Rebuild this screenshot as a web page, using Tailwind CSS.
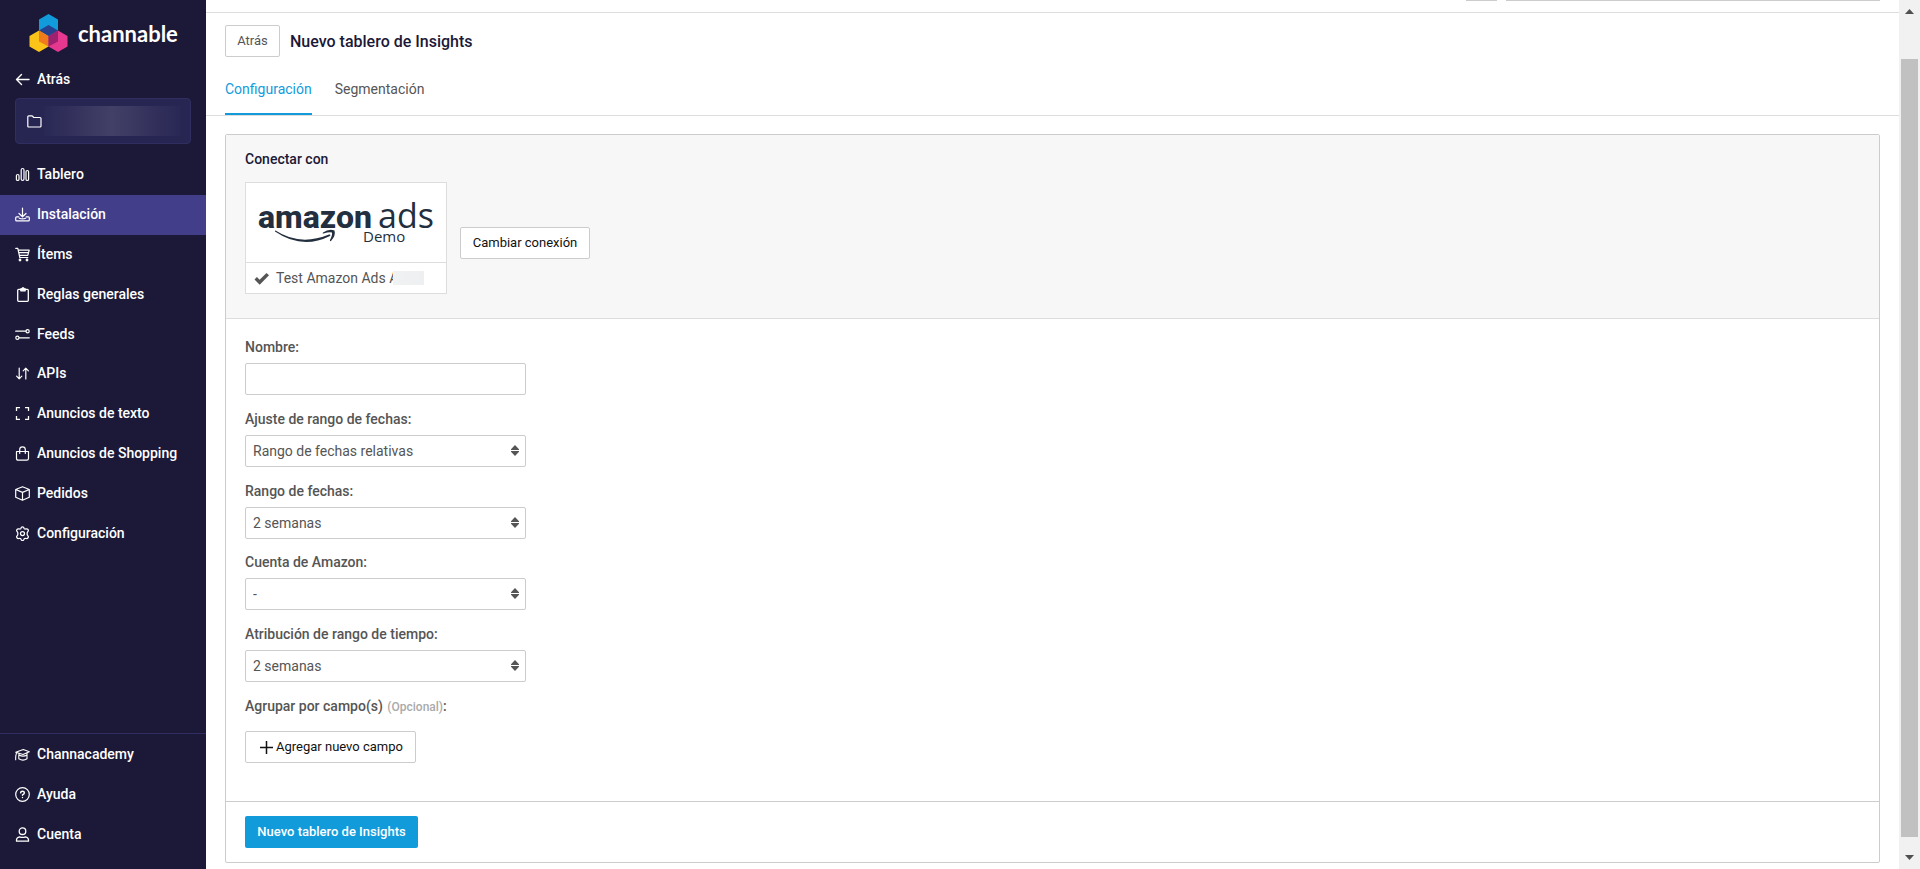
<!DOCTYPE html>
<html lang="es">

<head>
    <meta charset="utf-8">
    <meta name="viewport" content="width=device-width, initial-scale=1">
    <title>Channable - Nuevo tablero de Insights</title>
    <script src="https://cdn.jsdelivr.net/npm/@tailwindcss/browser@4"></script>
</head>

<body class="flex h-screen overflow-hidden bg-white font-['Roboto',sans-serif] text-sm leading-5 text-[#555]">

    <!-- Sidebar -->
    <aside class="flex w-[206px] shrink-0 flex-col bg-[#1b1937] font-medium text-white">
        <div class="flex h-[60px] items-start gap-[10px] pt-[14px] pl-[29px]">
            <svg class="h-[38px] w-[39px] shrink-0" viewBox="0 0 39 38">
                <path fill="#119bdb" d="M19.500 0l9.500 5.500v11l-9.500 5.500-9.500-5.500v-11z" />
                <path fill="#fcc419" d="M10 16.500l9.500 5.500v10.500L10 38 .500 32.500V22z" />
                <path fill="#e6388f" d="M29 16.500l9.500 5.500v10.500L29 38l-9.500-5.500V22z" />
                <path fill="#27418f" d="M19.500 11l9.500 5.500-9.500 5.500-9.500-5.500z" />
                <path fill="#ef7b1c" d="M10 16.500l9.500 5.500v10.500L10 27.500z" />
                <path fill="#9e2170" d="M29 16.500l-9.500 5.500v10.500l9.500-5z" />
            </svg>
            <span class="font-['Lato',sans-serif] text-[22px] leading-10 font-bold">channable</span>
        </div>

        <a href="#" class="flex h-[38px] items-center gap-[7px] px-[15px]">
            <svg class="size-[15px]" viewBox="0 0 15 15" fill="none" stroke="currentColor" stroke-width="1.400" stroke-linecap="round" stroke-linejoin="round"><path d="M14 7.500H1.500M6.500 2.500l-5 5 5 5" /></svg>
            Atrás
        </a>

        <!-- Current project, name hidden -->
        <div class="mx-[15px] flex h-[46px] items-center gap-[2px] rounded border border-[#302e60] bg-[#272552] pr-[10px] pl-[11px]">
            <svg class="size-[15px] shrink-0" viewBox="0 0 15 15" fill="none" stroke="currentColor" stroke-width="1.200" stroke-linejoin="round"><path d="M.800 12V2.800q0-1 1-1h3.400l1.600 1.700h6.200q1 0 1 1V12q0 1-1 1H1.800q-1 0-1-1z" /></svg>
            <div class="h-[30px] flex-1 bg-linear-to-r from-[#292754] via-[#434067] to-[#292754]"></div>
        </div>

        <nav class="mt-[11px] flex flex-col">
            <a href="#" class="flex h-10 items-center gap-[7px] px-[15px] pb-0.5">
                <svg class="size-[15px]" viewBox="0 0 15 15" fill="none" stroke="currentColor" stroke-width="1.200"><rect x="1.400" y="7.500" width="2.600" height="6" rx="1.300" /><rect x="6.200" y="1.500" width="2.800" height="12" rx="1.400" /><rect x="11" y="3.500" width="2.600" height="10" rx="1.300" /></svg>
                Tablero
            </a>
            <a href="#" class="flex h-10 items-center gap-[7px] bg-[#433e8a] px-[15px] pb-0.5">
                <svg class="size-[15px]" viewBox="0 0 15 15" fill="none" stroke="currentColor" stroke-width="1.200" stroke-linecap="round" stroke-linejoin="round"><path d="M7.500 1v8.500M4 6.500l3.500 3.300L11 6.500M3.800 9.800H1.600q-.9 0-.9.900v2.200q0 .9.900.9h11.800q.9 0 .9-.9v-2.200q0-.9-.9-.9h-2.200" /><path d="M4.300 11.200q3.200 1.400 6.400 0" /></svg>
                Instalación
            </a>
            <a href="#" class="flex h-10 items-center gap-[7px] px-[15px] pb-0.5">
                <svg class="size-[15px]" viewBox="0 0 15 15" fill="none" stroke="currentColor" stroke-width="1.200" stroke-linecap="round" stroke-linejoin="round"><path d="M.7 1.300h2.100l2 9.200h8M3.200 3.200h11L12.800 8.300H4.300M4 5.700h9.400" /><circle cx="5" cy="13" r=".8" fill="currentColor" /><circle cx="12" cy="13" r=".8" fill="currentColor" /></svg>
                Ítems
            </a>
            <a href="#" class="flex h-10 items-center gap-[7px] px-[15px] pb-0.5">
                <svg class="size-[15px]" viewBox="0 0 15 15" fill="none" stroke="currentColor" stroke-width="1.300" stroke-linejoin="round"><rect x="2.700" y="2.300" width="10.600" height="12" rx="1" /><path fill="currentColor" d="M5.800 1.800h1l.7-1h1l.7 1h1v2H5.800z" /></svg>
                Reglas generales
            </a>
            <a href="#" class="flex h-10 items-center gap-[7px] px-[15px] pb-0.5">
                <svg class="size-[15px]" viewBox="0 0 15 15" fill="none" stroke="currentColor" stroke-width="1.200" stroke-linecap="round"><path d="M.7 4.200h10.200M4.300 10.800h10" /><circle cx="12.600" cy="4.200" r="1.600" /><circle cx="2.400" cy="10.800" r="1.600" /></svg>
                Feeds
            </a>
            <a href="#" class="flex h-10 items-center gap-[7px] px-[15px] pb-1">
                <svg class="size-[15px]" viewBox="0 0 15 15" fill="none" stroke="currentColor" stroke-width="1.200" stroke-linecap="round" stroke-linejoin="round"><path d="M4.200 2v10.800M1.600 10.200l2.600 2.600 2.600-2.600M10.800 13V2.200M8.200 4.800l2.600-2.600 2.600 2.600" /></svg>
                APIs
            </a>
            <a href="#" class="flex h-10 items-center gap-[7px] px-[15px] pb-1">
                <svg class="size-[15px]" viewBox="0 0 15 15" fill="none" stroke="currentColor" stroke-width="1.300"><path d="M1.500 5V1.700H5M10 1.700h3.500V5M13.500 10v3.300H10M5 13.300H1.500V10" /></svg>
                Anuncios de texto
            </a>
            <a href="#" class="flex h-10 items-center gap-[7px] px-[15px] pb-1">
                <svg class="size-[15px]" viewBox="0 0 15 15" fill="none" stroke="currentColor" stroke-width="1.200" stroke-linecap="round" stroke-linejoin="round"><path d="M1.500 5.500h12v7q0 1.700-1.700 1.700H3.200q-1.700 0-1.700-1.700zM4.700 7.500V3.600a2.800 2.800 0 0 1 5.600 0v3.900" /></svg>
                Anuncios de Shopping
            </a>
            <a href="#" class="flex h-10 items-center gap-[7px] px-[15px] pb-1">
                <svg class="size-[15px]" viewBox="0 0 15 15" fill="none" stroke="currentColor" stroke-width="1.200" stroke-linejoin="round"><path d="M7.500.8l6.800 2.700v7.700l-6.800 3-6.800-3V3.500zM.7 3.500l6.800 2.900 6.800-2.900M7.500 6.400v7.800" /></svg>
                Pedidos
            </a>
            <a href="#" class="flex h-10 items-center gap-[7px] px-[15px] pb-1">
                <svg class="size-[15px]" viewBox="0 0 24 24" fill="none" stroke="currentColor" stroke-width="2" stroke-linejoin="round"><path d="M9.500 3.600Q10 1.300 12 1.300t2.500 2.300l.3.700q1 .8 2.200.4l.8-.1q2.200-.4 3.200 1.300 1 1.800-.6 3.300-1 .9-1 3.100t1 3.100q1.600 1.500.6 3.300-1 1.700-3.200 1.300l-.8-.1q-1.200-.4-2.200.4l-.3.700q-.5 2.300-2.500 2.300t-2.500-2.300l-.3-.7q-1-.8-2.200-.4l-.8.100q-2.200.4-3.200-1.300-1-1.800.6-3.300 1-.9 1-3.100t-1-3.100Q2 7.700 3 5.900 4 4.200 6.200 4.600l.8.100q1.200.4 2.200-.4z" /><circle cx="12" cy="12" r="3.200" /></svg>
                Configuración
            </a>
        </nav>

        <nav class="mt-auto flex flex-col border-t border-[#302e60] pb-[15px]">
            <a href="#" class="flex h-10 items-center gap-[7px] px-[15px]">
                <svg class="size-[15px]" viewBox="0 0 15 15" fill="none" stroke="currentColor" stroke-width="1.100" stroke-linecap="round" stroke-linejoin="round"><path d="M.7 5.200l7.600-2.600 6 2.200-6.300 2.700zM4 6.500v1.300M4 8q4 2.200 8 0V6M3.800 8v3.800q4.200 2.600 8.200 0V8M1.500 5.800q-1 3-.8 7" /></svg>
                Channacademy
            </a>
            <a href="#" class="flex h-10 items-center gap-[7px] px-[15px]">
                <svg class="size-[15px]" viewBox="0 0 15 15" fill="none" stroke="currentColor" stroke-width="1.200" stroke-linecap="round"><circle cx="7.500" cy="7.500" r="6.800" /><path stroke-width="1.400" d="M5.600 5.900q.1-1.700 1.900-1.700t1.900 1.500q0 1-1.900 2.100v.5M7.500 10.500v.1" /></svg>
                Ayuda
            </a>
            <a href="#" class="flex h-10 items-center gap-[7px] px-[15px]">
                <svg class="size-[15px]" viewBox="0 0 15 15" fill="none" stroke="currentColor" stroke-width="1.300" stroke-linejoin="round"><circle cx="7.500" cy="4.200" r="3.300" /><path d="M1.500 14.200v-1.400q.3-2.600 3-3 3 1.300 6 0 2.700.4 3 3v1.400z" /></svg>
                Cuenta
            </a>
        </nav>
    </aside>

    <!-- Content -->
    <main class="min-w-0 flex-1 overflow-hidden">
        <!-- Lower edge of the toolbar that is scrolled away -->
        <div class="flex h-[13px] justify-end gap-[9px] border-b border-[#ddd] pr-[19px]">
            <div class="h-px w-[31px] bg-[#ccc]"></div>
            <div class="h-px w-[374px] bg-[#ccc]"></div>
        </div>

        <header class="border-b border-[#ddd] px-[19px] pt-3">
            <div class="flex items-center gap-[10px]">
                <button type="button" class="h-8 w-[55px] rounded-xs border border-[#ccc] text-[13px]">Atrás</button>
                <h1 class="pt-0.5 text-base font-medium text-[#1b1937]">Nuevo tablero de Insights</h1>
            </div>
            <div class="flex gap-[23px] pt-[22px]">
                <a href="#" class="h-9 border-b-2 border-[#119bdb] text-[#119bdb]">Configuración</a>
                <a href="#">Segmentación</a>
            </div>
        </header>

        <form class="mx-[19px] mt-[18px] rounded-xs border border-[#ccc]">
            <section class="border-b border-[#ddd] bg-[#f7f7f7] px-[19px] pt-[14px] pb-6">
                <h2 class="font-medium text-[#1b1937]">Conectar con</h2>
                <div class="mt-[13px] flex items-center gap-[13px]">
                    <div class="w-[202px] border border-[#ddd] bg-white">
                        <svg class="block h-[79px] w-[200px]" viewBox="0 0 200 79" fill="#232f3e" role="img" aria-label="amazon ads Demo">
                            <text x="12" y="45" font-family="Roboto, sans-serif" font-weight="800" font-size="32">amazon</text>
                            <text x="132" y="45" font-family="Open Sans, sans-serif" font-size="34">ads</text>
                            <text x="117" y="59" font-family="Open Sans, sans-serif" font-size="15">Demo</text>
                            <path d="M29.500 47.500Q54 63.500 83 51.500q2.500-.5 1 1.500Q56 67 29 48.500q-.5-1 .5-1z" />
                            <path d="M77 49.500q6-4 11.500-2 1.500 5-3.500 10.500-1.500.5-1-1 2.500-5 2-7.500-2.500-1-8.500 1-1.500.3-.5-1z" />
                        </svg>
                        <div class="relative flex h-[31px] items-center gap-[7px] border-t border-[#ddd] pl-2">
                            <svg class="size-[15px]" viewBox="0 0 15 15" fill="#555"><path d="M.5 8.500l2.400-2.400 2.700 2.700L12.500 2 15 4.300l-9.300 9.400z" /></svg>
                            <span>Test Amazon Ads A</span>
                            <span class="absolute top-2 left-[147px] h-[14px] w-[31px] bg-linear-to-r from-[#f1f2f2] to-[#edeff1]"></span>
                        </div>
                    </div>
                    <button type="button" class="mt-[10px] h-8 w-[130px] rounded-xs border border-[#ccc] bg-white text-[13px] text-[#111]">Cambiar conexión</button>
                </div>
            </section>

            <section class="flex flex-col items-start px-[19px] pt-[18px] pb-[38px]">
                <label for="name" class="font-medium">Nombre:</label>
                <input id="name" type="text" class="mt-[6px] h-8 w-[281px] rounded-xs border border-[#ccc] bg-white px-2">

                <label for="rangeType" class="mt-[14px] font-medium">Ajuste de rango de fechas:</label>
                <div class="relative mt-[6px] w-[281px]">
                    <select id="rangeType" class="block h-8 w-full appearance-none rounded-xs border border-[#ccc] bg-white pr-8 pl-[7px]">
                        <option>Rango de fechas relativas</option>
                    </select>
                    <svg class="pointer-events-none absolute top-[10px] right-[7px] h-[11px] w-2" viewBox="0 0 8 11" fill="#555"><path d="M4 0l4 4.200v.8H0v-.8zM4 11L0 6.800V6h8v.8z" /></svg>
                </div>

                <label for="range" class="mt-[14px] font-medium">Rango de fechas:</label>
                <div class="relative mt-[6px] w-[281px]">
                    <select id="range" class="block h-8 w-full appearance-none rounded-xs border border-[#ccc] bg-white pr-8 pl-[7px]">
                        <option>2 semanas</option>
                    </select>
                    <svg class="pointer-events-none absolute top-[10px] right-[7px] h-[11px] w-2" viewBox="0 0 8 11" fill="#555"><path d="M4 0l4 4.200v.8H0v-.8zM4 11L0 6.800V6h8v.8z" /></svg>
                </div>

                <label for="account" class="mt-[13px] font-medium">Cuenta de Amazon:</label>
                <div class="relative mt-[6px] w-[281px]">
                    <select id="account" class="block h-8 w-full appearance-none rounded-xs border border-[#ccc] bg-white pr-8 pl-[7px]">
                        <option>-</option>
                    </select>
                    <svg class="pointer-events-none absolute top-[10px] right-[7px] h-[11px] w-2" viewBox="0 0 8 11" fill="#555"><path d="M4 0l4 4.200v.8H0v-.8zM4 11L0 6.800V6h8v.8z" /></svg>
                </div>

                <label for="attribution" class="mt-[14px] font-medium">Atribución de rango de tiempo:</label>
                <div class="relative mt-[6px] w-[281px]">
                    <select id="attribution" class="block h-8 w-full appearance-none rounded-xs border border-[#ccc] bg-white pr-8 pl-[7px]">
                        <option>2 semanas</option>
                    </select>
                    <svg class="pointer-events-none absolute top-[10px] right-[7px] h-[11px] w-2" viewBox="0 0 8 11" fill="#555"><path d="M4 0l4 4.200v.8H0v-.8zM4 11L0 6.800V6h8v.8z" /></svg>
                </div>

                <p class="mt-[14px] font-medium">Agrupar por campo(s) <span class="ml-px text-xs text-[#aaa]">(Opcional)</span>:</p>
                <button type="button" class="mt-[15px] flex h-8 items-center gap-[3px] rounded-xs border border-[#ccc] bg-white pr-3 pl-[14px] text-[13px] text-[#111]">
                    <svg class="size-[13px]" viewBox="0 0 13 13" stroke="currentColor" stroke-width="1.500"><path d="M6.500 0v13M0 6.500h13" /></svg>
                    Agregar nuevo campo
                </button>
            </section>

            <footer class="border-t border-[#ccc] px-[19px] py-[14px]">
                <button type="submit" class="block h-8 w-[173px] rounded-xs bg-[#119bdb] text-[13px] font-medium text-white">Nuevo tablero de Insights</button>
            </footer>
        </form>
    </main>

    <!-- Scrollbar -->
    <div class="flex w-[21px] shrink-0 flex-col items-center bg-[#f1f1f1]">
        <svg class="mt-[9px] h-[5px] w-[9px] shrink-0" viewBox="0 0 9 5" fill="#505050"><path d="M4.500 0L9 5H0z" /></svg>
        <div class="mt-[45px] mb-[18px] w-[17px] flex-1 bg-[#c1c1c1]"></div>
        <svg class="mb-[9px] h-[5px] w-[9px] shrink-0" viewBox="0 0 9 5" fill="#505050"><path d="M0 0h9L4.500 5z" /></svg>
    </div>
</body>

</html>
